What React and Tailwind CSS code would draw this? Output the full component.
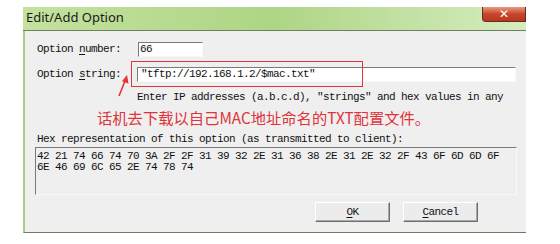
import React from 'react';

const mono = { fontFamily: '"Liberation Mono", "DejaVu Sans Mono", monospace' };

const Sunken = ({ className, children }) => (
  <div className={`border-t border-l border-t-[#7a7a7a] border-l-[#7a7a7a] border-b border-r border-b-[#f8f8f8] border-r-[#f8f8f8] ${className}`}>
    {children}
  </div>
);

const Button = ({ hot, rest }) => (
  <button className="w-[75px] h-[20px] bg-[#ececec] border border-t-white border-l-white border-b-[#6f6f6f] border-r-[#6f6f6f] shadow-[inset_-1px_-1px_0_#a8a8a8] text-[11px] tracking-[-0.6px] text-[#111] flex items-center justify-center" style={mono}>
    <span>
      <span className="underline underline-offset-2">{hot}</span>
      {rest}
    </span>
  </button>
);

export default function App() {
  return (
    <div className="w-[560px] h-[244px] bg-white pl-[23px] pt-[7px]">
      <div className="w-[503px] h-[226px] flex flex-col">
        {/* title bar */}
        <div className="h-[24px] flex items-start justify-between bg-gradient-to-r from-[#c3e29e] via-[#aed585] to-[#d6ecbf] border-b border-[#6f7f60]">
          <span
            className="pl-[3px] pt-[2px] text-[13px] leading-[16px] text-[#1a1a1a]"
            style={{ fontFamily: '"Noto Sans", "Open Sans", sans-serif' }}
          >
            Edit/Add Option
          </span>
          <div className="w-[44px] h-[15px] rounded-bl-[4px] border border-t-0 border-[#6a2a1a] bg-gradient-to-b from-[#e59a80] via-[#c8442a] to-[#b53a20] flex items-center justify-center">
            <span className="text-white text-[12px] font-bold leading-none" style={{ fontFamily: '"DejaVu Sans", sans-serif' }}>✕</span>
          </div>
        </div>

        {/* body */}
        <div className="relative flex-1 flex flex-col bg-[#efefef] border-l-2 border-l-[#a9cb88] border-b border-b-[#6d7b60] pl-[12px] text-[11px] tracking-[-0.6px] text-[#111]" style={mono}>
          <div className="mt-[11px] h-[15px] flex items-center">
            <span className="w-[101px]">
              Option <span className="underline underline-offset-2">n</span>umber:
            </span>
            <Sunken className="w-[65px] h-[15px] bg-white pl-[1px] leading-[13px]">66</Sunken>
          </div>

          <div className="mt-[10px] h-[15px] flex items-center">
            <span className="w-[100px]">
              Option <span className="underline underline-offset-2">s</span>tring:
            </span>
            <Sunken className="w-[379px] h-[15px] bg-white pl-[3px] leading-[13px]">"tftp://192.168.1.2/$mac.txt"</Sunken>
          </div>

          <div className="mt-[8px] h-[14px] flex items-center pl-[100px] whitespace-nowrap">
            Enter IP addresses (a.b.c.d), "strings" and hex values in any
          </div>

          <div
            className="mt-[3px] h-[20px] flex items-center pl-[60px] text-[15.3px] tracking-normal text-[#e0333a] whitespace-nowrap"
            style={{ fontFamily: '"Noto Sans CJK SC", "Noto Sans", sans-serif' }}
          >
            话机去下载以自己MAC地址命名的TXT配置文件。
          </div>

          <div className="mt-[6px] h-[12px] flex items-center whitespace-nowrap">
            Hex representation of this option (as transmitted to client):
          </div>

          <Sunken className="mt-[2px] -ml-[2px] w-[482px] h-[48px] pl-[1px] pt-[3px] leading-[11px] whitespace-pre">
            {'42 21 74 66 74 70 3A 2F 2F 31 39 32 2E 31 36 38 2E 31 2E 32 2F 43 6F 6D 6D 6F\n6E 46 69 6C 65 2E 74 78 74'}
          </Sunken>

          <div className="mt-[7px] flex justify-end gap-[13px] pr-[48px]">
            <Button hot="O" rest="K" />
            <Button hot="C" rest="ancel" />
          </div>

          {/* red annotation box */}
          <div className="absolute left-[106px] top-[30px] w-[232px] h-[26px] border-[1.5px] border-[#e0333a]" />
          {/* red arrow */}
          <svg className="absolute left-[88px] top-[42px]" width="20" height="26" viewBox="0 0 20 26">
            <line x1="6" y1="23" x2="12" y2="8" stroke="#e0333a" strokeWidth="1.6" />
            <polygon points="14,2 15.5,10.5 9,8.3" fill="#e0333a" />
          </svg>
        </div>
      </div>
    </div>
  );
}
